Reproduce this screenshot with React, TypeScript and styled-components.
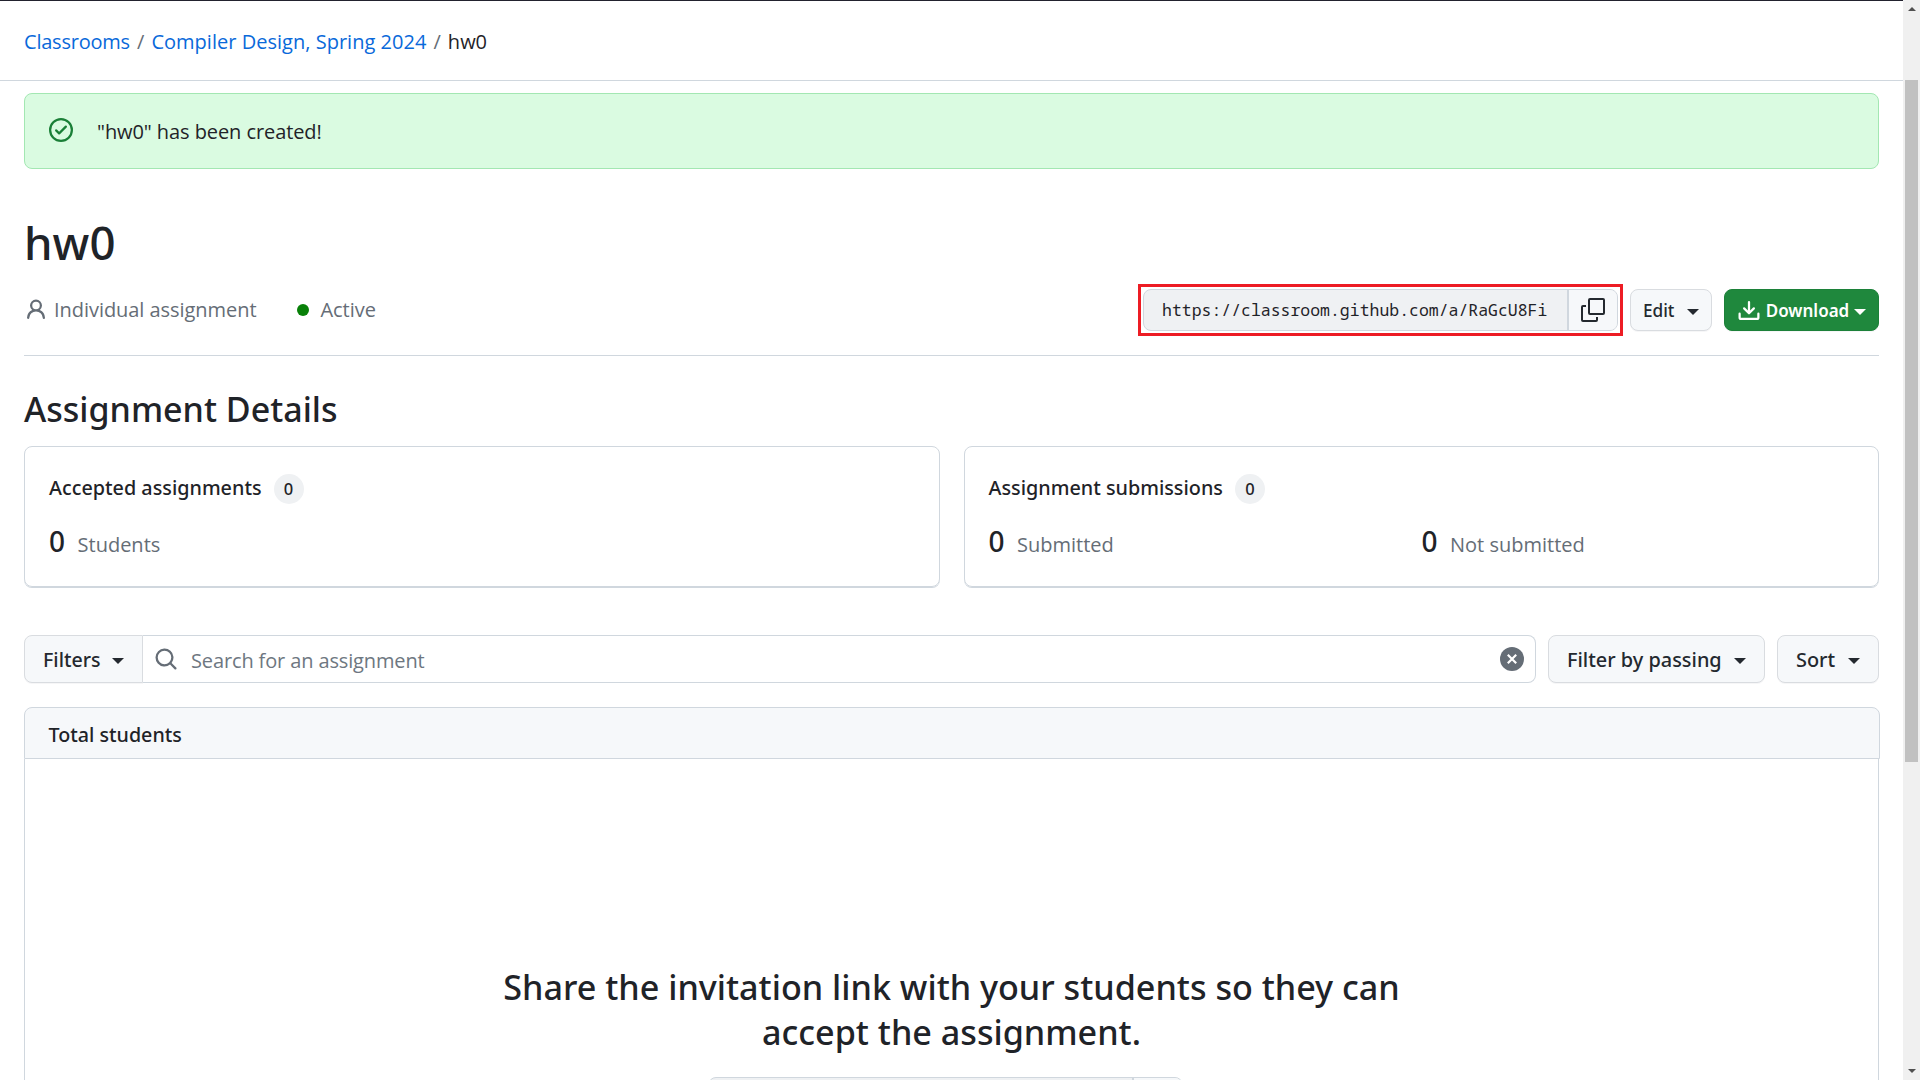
import React from 'react';
import styled, { createGlobalStyle, css } from 'styled-components';

const sans = '"Open Sans", "Noto Sans", sans-serif';
const sansMedium = '"Noto Sans", "Open Sans", sans-serif';
const mono = '"Noto Sans Mono", "DejaVu Sans Mono", monospace';

const color = {
  fg: '#1f2328',
  muted: '#656d76',
  link: '#0969da',
  border: '#d0d7de',
  subtle: '#f6f8fa',
  button: '#d9dce0',
};

const Global = createGlobalStyle`
  *, *::before, *::after { box-sizing: border-box; }
  html, body { margin: 0; height: 1080px; overflow: hidden; background: #fff; }
  body { font: 400 20px/30px ${sans}; color: ${color.fg}; }
  svg { display: block; flex: none; }
`;

const Window = styled.div`
  display: flex;
  height: 1080px;
  overflow: hidden;
`;

const Page = styled.div`
  flex: 1;
  min-width: 0;
  border-top: 1px solid #22222e;
`;

const Breadcrumbs = styled.nav`
  display: flex;
  height: 80px;
  padding: 26px 24px 0;
  border-bottom: 1px solid ${color.border};
  white-space: pre;
`;

const Crumb = styled.a<{ $tracking?: number }>`
  color: ${color.link};
  text-decoration: none;
  letter-spacing: ${p => p.$tracking ?? 0}px;
`;

const Slash = styled.span`
  width: 21.5px;
  text-align: center;
  color: ${color.muted};
`;

const Main = styled.main`
  padding: 12px 24px 0;
`;

const Flash = styled.div`
  display: flex;
  align-items: center;
  gap: 24px;
  height: 76px;
  padding: 1px 24px 0;
  letter-spacing: -0.08px;
  color: ${color.fg};
  background: #dafbe1;
  border: 1px solid #a3e7b2;
  border-radius: 8px;

  svg { color: #1a7f37; margin-top: -3px; }
`;

const Title = styled.h1`
  margin: 43px 0 2px;
  font: 500 45.6px/60px ${sansMedium};
`;

const Summary = styled.div`
  display: flex;
  align-items: center;
  height: 82px;
  padding-bottom: 9px;
  border-bottom: 1px solid ${color.border};
`;

const Meta = styled.span`
  display: flex;
  align-items: center;
  color: ${color.muted};
  margin-right: 41px;
`;

const MetaText = styled.span`
  margin-left: 6px;
  letter-spacing: -0.05px;
`;

const StatusDot = styled.i`
  width: 12px;
  height: 12px;
  margin: -1px 5px 0 0;
  border-radius: 50%;
  background: #088008;
`;

const Actions = styled.div`
  display: flex;
  align-items: center;
  margin-left: auto;
`;

const Highlight = styled.div`
  padding: 2px;
  border: 3px solid #ed1c24;
  margin-right: 7px;
`;

const LinkField = styled.div`
  display: grid;
  grid-template-columns: 1fr 50px;
  width: 475px;
  height: 42px;
  border: 1px solid ${color.border};
  border-radius: 8px;
  overflow: hidden;
  background: #eff1f3;
`;

const LinkText = styled.span`
  padding-left: 18px;
  font: 400 16.48px/40px ${mono};
  white-space: nowrap;
`;

const CopyButton = styled.span`
  display: flex;
  align-items: center;
  justify-content: center;
  border-left: 2px solid ${color.border};
  background: ${color.subtle};
  color: #24292f;
`;

const buttonBase = css`
  display: flex;
  align-items: center;
  justify-content: space-between;
  flex: none;
  border-radius: 8px;
  font-family: ${sansMedium};
  font-weight: 500;
  color: #24292f;
  background: ${color.subtle};
  border: 1px solid ${color.button};
  box-shadow: 0 1px 0 rgba(31, 35, 40, 0.04);
`;

const Button = styled.div<{ $w: number; $h?: number; $size?: number; $pad: number }>`
  ${buttonBase}
  width: ${p => p.$w}px;
  height: ${p => p.$h ?? 48}px;
  padding: 1px ${p => p.$pad}px 0;
  font-size: ${p => p.$size ?? 19.9}px;
`;

const PrimaryButton = styled(Button)`
  margin-left: 12px;
  color: #fff;
  font-weight: 600;
  background: #1f883d;
  border-color: #1c8139;
`;

const Caret = styled.i`
  border: 6px solid transparent;
  border-top-color: currentColor;
  border-bottom: 0;
  margin-top: 2px;
`;

const SectionTitle = styled.h2`
  margin: 30px 0 0;
  font: 500 34px/46px ${sansMedium};
`;

const Cards = styled.div`
  display: grid;
  grid-template-columns: 1fr 1fr;
  gap: 24px;
  margin-top: 14px;
`;

const Card = styled.section`
  height: 141px;
  padding: 25px 24px 0;
  border: 1px solid ${color.border};
  border-radius: 8px;
  box-shadow: 0 1px 0 ${color.border};
`;

const CardTitle = styled.h3`
  display: flex;
  align-items: center;
  margin: 0;
  font: 500 19.8px/30px ${sansMedium};
`;

const Counter = styled.span`
  width: 30px;
  height: 30px;
  margin: 2px 0 0 12px;
  border-radius: 50%;
  text-align: center;
  font-size: 16.5px;
  background: #eff1f3;
`;

const Stats = styled.div`
  display: grid;
  grid-template-columns: 433px 1fr;
  margin-top: 17px;
`;

const Stat = styled.div`
  display: flex;
  align-items: baseline;
  gap: 12.5px;
  color: ${color.muted};
`;

const StatNumber = styled.b`
  font: 500 28px/40px ${sansMedium};
  color: ${color.fg};
`;

const Toolbar = styled.div`
  display: flex;
  gap: 12px;
  margin-top: 48px;
`;

const SearchGroup = styled.div`
  display: flex;
  flex: 1;
  height: 48px;
`;

const FiltersButton = styled(Button)`
  border-radius: 8px 0 0 8px;
`;

const SearchBox = styled.div`
  display: flex;
  align-items: center;
  flex: 1;
  padding: 0 11px;
  color: ${color.muted};
  border: 1px solid ${color.border};
  border-left: 0;
  border-radius: 0 8px 8px 0;
`;

const Placeholder = styled.span`
  flex: 1;
  margin-left: 13px;
  padding-top: 3px;
  letter-spacing: -0.13px;
  color: #6e7781;
`;

const TableHead = styled.div`
  height: 52px;
  margin: 24px -1px 0 0;
  padding-left: 23.5px;
  font: 500 19.7px/54px ${sansMedium};
  background: ${color.subtle};
  border: 1px solid ${color.border};
  border-radius: 8px 8px 0 0;
`;

const Blank = styled.div`
  display: flex;
  flex-direction: column;
  align-items: center;
  height: 400px;
  padding-top: 205px;
  border: 1px solid ${color.border};
  border-top: 0;
`;

const BlankTitle = styled.h2`
  width: 930px;
  margin: 0 0 23px;
  text-align: center;
  font: 500 34.15px/45px ${sansMedium};
`;

const InviteField = styled(LinkField)`
  margin-right: 12px;
`;

const Scrollbar = styled.aside`
  display: flex;
  flex-direction: column;
  align-items: center;
  width: 17px;
  background: #f0f0f0;
`;

const Thumb = styled.div`
  width: 13px;
  height: 682px;
  margin: 69px 0 auto;
  background: #c1c1c1;
`;

const Arrow = styled.i<{ $down?: boolean }>`
  margin: ${p => (p.$down ? '0 0 7px' : '7px 0 0')};
  border: 4px solid transparent;
  ${p => (p.$down ? 'border-top-color: #505050; border-bottom: 0;' : 'border-bottom-color: #505050; border-top: 0;')}
`;

type IconProps = { size: number; d: string; box?: number };
const Icon = ({ size, d, box = 16 }: IconProps) => (
  <svg width={size} height={size} viewBox={`0 0 ${box} ${box}`} fill="currentColor"><path d={d} /></svg>
);

const icons = {
  check: 'M0 8a8 8 0 1 1 16 0A8 8 0 0 1 0 8Zm1.5 0a6.5 6.5 0 1 0 13 0 6.5 6.5 0 0 0-13 0Zm10.28-1.72-4.5 4.5a.75.75 0 0 1-1.06 0l-2-2a.751.751 0 0 1 .018-1.042.751.751 0 0 1 1.042-.018l1.47 1.47 3.97-3.97a.751.751 0 0 1 1.042.018.751.751 0 0 1 .018 1.042Z',
  person: 'M10.561 8.073a6.005 6.005 0 0 1 3.432 5.142.75.75 0 1 1-1.498.07 4.5 4.5 0 0 0-8.99 0 .75.75 0 0 1-1.498-.07 6.004 6.004 0 0 1 3.431-5.142 3.999 3.999 0 1 1 5.123 0ZM10.5 5a2.5 2.5 0 1 0-5 0 2.5 2.5 0 0 0 5 0Z',
  download: 'M2.75 14A1.75 1.75 0 0 1 1 12.25v-2.5a.75.75 0 0 1 1.5 0v2.5c0 .138.112.25.25.25h10.5a.25.25 0 0 0 .25-.25v-2.5a.75.75 0 0 1 1.5 0v2.5A1.75 1.75 0 0 1 13.25 14ZM7.25 7.689V2a.75.75 0 0 1 1.5 0v5.689l1.97-1.969a.749.749 0 1 1 1.06 1.06l-3.25 3.25a.749.749 0 0 1-1.06 0L4.22 6.78a.749.749 0 1 1 1.06-1.06l1.97 1.969Z',
  search: 'M10.68 11.74a6 6 0 0 1-7.922-8.982 6 6 0 0 1 8.982 7.922l3.04 3.04a.749.749 0 0 1-.326 1.275.749.749 0 0 1-.734-.215ZM11.5 7a4.499 4.499 0 1 0-8.997 0A4.499 4.499 0 0 0 11.5 7Z',
};

const CopyIcon = () => (
  <svg width="24" height="24" viewBox="0 0 24 24" fill="none" stroke="currentColor" strokeWidth="2">
    <rect x="8" y="1" width="15" height="15" rx="1" />
    <path d="M5 8H2a1 1 0 0 0-1 1v13a1 1 0 0 0 1 1h13a1 1 0 0 0 1-1v-3" />
  </svg>
);

const ClearIcon = () => (
  <svg width="24" height="24" viewBox="0 0 24 24">
    <circle cx="12" cy="12" r="12" fill="#656d76" />
    <path d="M7.8 7.8l8.4 8.4M16.2 7.8l-8.4 8.4" stroke="#fff" strokeWidth="2.2" />
  </svg>
);

export default function App() {
  return (
    <Window>
      <Global />
      <Page>
        <Breadcrumbs>
          <Crumb $tracking={-0.22}>Classrooms</Crumb><Slash>/</Slash>
          <Crumb $tracking={0.02}>Compiler Design, Spring 2024</Crumb><Slash>/</Slash>
          <span>hw0</span>
        </Breadcrumbs>
        <Main>
          <Flash><Icon size={24} d={icons.check} />"hw0" has been created!</Flash>
          <Title>hw0</Title>
          <Summary>
            <Meta><Icon size={24} d={icons.person} /><MetaText>Individual assignment</MetaText></Meta>
            <Meta><StatusDot /><MetaText>Active</MetaText></Meta>
            <Actions>
              <Highlight>
                <LinkField>
                  <LinkText>https://classroom.github.com/a/RaGcU8Fi</LinkText>
                  <CopyButton><CopyIcon /></CopyButton>
                </LinkField>
              </Highlight>
              <Button $w={82} $h={42} $size={17.2} $pad={12}>Edit<Caret /></Button>
              <PrimaryButton $w={155} $h={42} $size={17} $pad={12}>
                <Icon size={24} d={icons.download} />Download<Caret />
              </PrimaryButton>
            </Actions>
          </Summary>
          <SectionTitle>Assignment Details</SectionTitle>
          <Cards>
            <Card>
              <CardTitle>Accepted assignments<Counter>0</Counter></CardTitle>
              <Stats><Stat><StatNumber>0</StatNumber>Students</Stat></Stats>
            </Card>
            <Card>
              <CardTitle>Assignment submissions<Counter>0</Counter></CardTitle>
              <Stats>
                <Stat><StatNumber>0</StatNumber>Submitted</Stat>
                <Stat><StatNumber>0</StatNumber>Not submitted</Stat>
              </Stats>
            </Card>
          </Cards>
          <Toolbar>
            <SearchGroup>
              <FiltersButton $w={119} $pad={18} $size={19.6}>Filters<Caret /></FiltersButton>
              <SearchBox>
                <Icon size={24} d={icons.search} />
                <Placeholder>Search for an assignment</Placeholder>
                <ClearIcon />
              </SearchBox>
            </SearchGroup>
            <Button $w={217} $pad={18}>Filter by passing<Caret /></Button>
            <Button $w={102} $pad={18}>Sort<Caret /></Button>
          </Toolbar>
          <TableHead>Total students</TableHead>
          <Blank>
            <BlankTitle>Share the invitation link with your students so they can accept the assignment.</BlankTitle>
            <InviteField><span /><CopyButton /></InviteField>
          </Blank>
        </Main>
      </Page>
      <Scrollbar><Arrow /><Thumb /><Arrow $down /></Scrollbar>
    </Window>
  );
}
